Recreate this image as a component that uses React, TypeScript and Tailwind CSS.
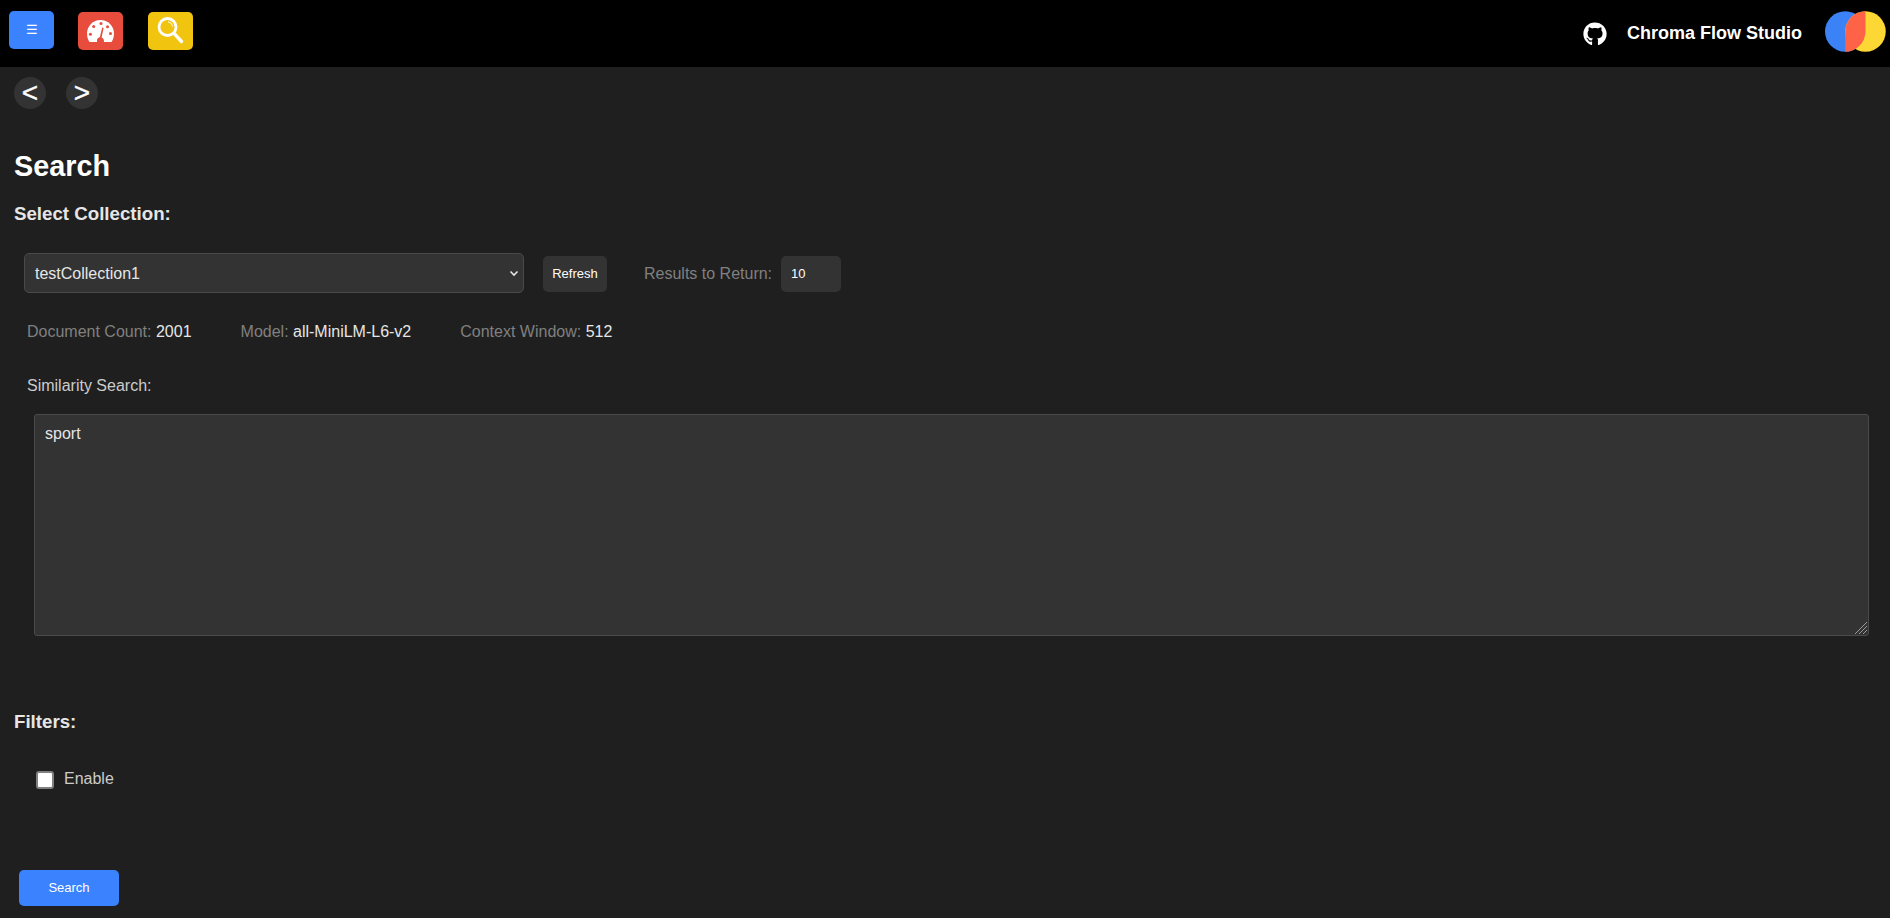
import { FaGithub } from "react-icons/fa";

function NavCircle({ label }: { label: string }) {
  return (
    <button className="flex h-8 w-8 items-center justify-center rounded-full bg-[#333333] text-[28px] leading-none text-white [-webkit-text-stroke:0.4px_white]">
      {label}
    </button>
  );
}

// red dashboard tile
function GaugeIcon() {
  return (
    <svg viewBox="0 0 27 22" className="h-[22px] w-[27px]">
      <path d="M13.5 0 C6 0 0 6 0 13.5 C0 17 1 19.8 2.5 22 L24.5 22 C26 19.8 27 17 27 13.5 C27 6 21 0 13.5 0 Z" fill="white" />
      <g fill="#e74c3c">
        <circle cx="3.4" cy="14.3" r="1.5" />
        <circle cx="6.7" cy="6.5" r="1.5" />
        <circle cx="14" cy="3.4" r="1.5" />
        <circle cx="20.5" cy="6.7" r="1.5" />
        <circle cx="23.5" cy="13.5" r="1.5" />
        <path d="M15.2 7.5 L16.6 8 L14.6 17.5 A3.6 3.6 0 0 1 17 21 L17 22 L10 22 L10 21 A3.6 3.6 0 0 1 12.8 17.3 Z" />
      </g>
    </svg>
  );
}

function MagnifierIcon() {
  return (
    <svg viewBox="0 0 32 32" className="h-[32px] w-[32px]" fill="none" stroke="white">
      <circle cx="12.5" cy="12" r="8.5" strokeWidth="2.8" />
      <path d="M13 6.8 A5.5 5.5 0 0 1 17.8 11.5" strokeWidth="1" />
      <path d="M18.8 18.2 L26.5 26.5" strokeWidth="3.4" strokeLinecap="round" />
    </svg>
  );
}

function Logo() {
  return (
    <svg viewBox="0 0 61 41" className="mb-[5px] ml-[23px] h-[41px] w-[61px]">
      <circle cx="20.25" cy="20.5" r="20.25" fill="#3b82f6" />
      <circle cx="40.5" cy="20.5" r="20.25" fill="#fdd835" />
      <path d="M40.5 0.25 A20.25 20.25 0 0 0 20.25 20.5 L20.25 40.75 A20.25 20.25 0 0 0 40.5 20.5 Z" fill="#ff6347" />
    </svg>
  );
}

export default function App() {
  return (
    <div className="h-[918px] overflow-hidden bg-[#1f1f1f] font-['Liberation_Sans',Arial,sans-serif] text-white">
      {/* top bar */}
      <header className="flex h-[67px] items-center justify-between bg-black pr-[4px] pl-[9px]">
        <div className="mb-[5px] flex items-center gap-[24px]">
          <button className="mb-[2px] flex h-[38px] w-[45px] items-center justify-center rounded-[5px] bg-[#3b82ff] text-[13px] text-white">
            ☰
          </button>
          <button className="flex h-[38px] w-[45px] items-center justify-center rounded-[5px] bg-[#e74c3c]">
            <GaugeIcon />
          </button>
          <button className="ml-[1px] flex h-[38px] w-[45px] items-center justify-center rounded-[5px] bg-[#f1c40f]">
            <MagnifierIcon />
          </button>
        </div>
        <div className="flex items-center">
          <FaGithub className="h-[24px] w-[24px]" />
          <span className="ml-[20px] text-[18px] font-bold">Chroma Flow Studio</span>
          <Logo />
        </div>
      </header>

      <div className="flex gap-5 pt-[10px] pl-[14px]">
        <NavCircle label="<" />
        <NavCircle label=">" />
      </div>

      <main className="px-[14px]">
        <h1 className="mt-[41px] text-[28.8px] leading-[33px] font-bold">Search</h1>
        <h2 className="mt-[20px] text-[18.7px] leading-[22px] font-bold text-[#e6e6e6]">Select Collection:</h2>

        <div className="mt-[28px] flex items-center pl-[10px]">
          <div className="relative flex h-[40px] w-[500px] items-center rounded-[5px] border border-[#4a4a4a] bg-[#333333] pt-[2px] pl-[10px] text-[16px] text-[#e6e6e6]">
            testCollection1
            <span className="absolute top-[14px] right-[4px]">
              <svg viewBox="0 0 10 10" className="h-[10px] w-[10px]" fill="none" stroke="#e6e6e6" strokeWidth="1.6">
                <path d="M1.5 3.5 L5 7 L8.5 3.5" />
              </svg>
            </span>
          </div>
          <button className="mt-[2px] ml-[19px] h-[36px] w-[64px] rounded-[5px] bg-[#333333] text-[13px] text-white">Refresh</button>
          <span className="mt-[2px] ml-[37px] text-[16px] text-[#808080]">Results to Return:</span>
          <div className="mt-[2px] ml-[9px] flex h-[36px] w-[60px] items-center rounded-[5px] bg-[#333333] pl-[10px] text-[13px]">10</div>
        </div>

        <div className="mt-[30px] flex pl-[13px] text-[16px] leading-[18px] text-[#808080]">
          <span>
            Document Count: <span className="text-[#e6e6e6]">2001</span>
          </span>
          <span className="ml-[49px]">
            Model: <span className="text-[#e6e6e6]">all-MiniLM-L6-v2</span>
          </span>
          <span className="ml-[49px]">
            Context Window: <span className="text-[#e6e6e6]">512</span>
          </span>
        </div>

        <div className="mt-[36px] pl-[13px] text-[16px] leading-[18px] text-[#cccccc]">Similarity Search:</div>

        <div className="relative mt-[19px] ml-[20px] w-[1835px]">
          <textarea
            defaultValue="sport"
            className="block h-[222px] w-full resize-none rounded-[3px] border border-[#4a4a4a] bg-[#333333] p-[10px] text-[16px] leading-[18px] text-[#e6e6e6]"
          />
          {/* resize grip */}
          <svg viewBox="0 0 14 14" className="absolute right-[1px] bottom-[1px] h-[14px] w-[14px]" stroke="#9a9a9a" strokeWidth="1">
            <path d="M13 1 L1 13 M13 5 L5 13 M13 9 L9 13" />
          </svg>
        </div>

        <h2 className="mt-[75px] text-[18.7px] leading-[22px] font-bold text-[#e6e6e6]">Filters:</h2>

        <label className="mt-[34px] ml-[22px] flex items-center">
          <input type="checkbox" className="mt-[2px] h-[18px] w-[18px] appearance-none rounded-[3px] border-2 border-[#808080] bg-white" />
          <span className="ml-[10px] text-[16px] text-[#cccccc]">Enable</span>
        </label>

        <button className="mt-[79px] ml-[5px] h-[36px] w-[100px] rounded-[5px] bg-[#3b82ff] text-[13px] text-white">Search</button>
      </main>
    </div>
  );
}
